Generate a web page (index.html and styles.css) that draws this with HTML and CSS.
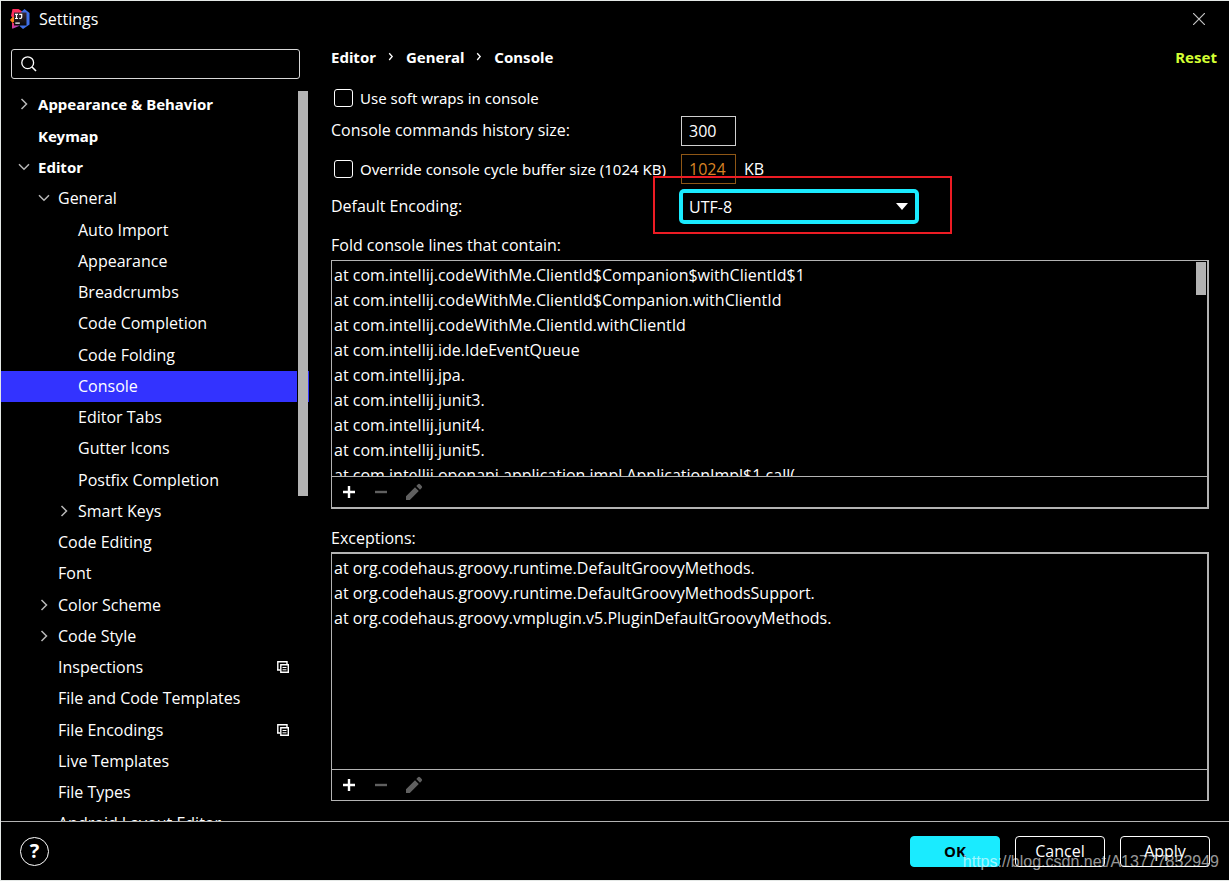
FILE: index.html
```html
<!DOCTYPE html>
<html lang="en">
<head>
<meta charset="utf-8">
<title>Settings</title>
<link rel="stylesheet" href="styles.css">
</head>
<body>
<svg class="sprite" aria-hidden="true">
  <symbol id="right" viewBox="0 0 16 16"><path d="M5.5 3 10.500 8l-5 5" fill="none" stroke="#b8b8b8" stroke-width="1.5"/></symbol>
  <symbol id="down" viewBox="0 0 16 16"><path d="M3 5.2 8 10.2l5-5" fill="none" stroke="#b8b8b8" stroke-width="1.5"/></symbol>
  <symbol id="crumb" viewBox="0 0 6 10"><path d="M1.2 1.2 4.2 4.500 1.2 8" fill="none" stroke="#fff" stroke-width="1.3"/></symbol>
  <symbol id="copy" viewBox="0 0 12 12"><path d="M.8 9V.8H10M0 9h3M10 0v3" fill="none" stroke="#fff" stroke-width="1.4"/><path d="M3.8 3.8h7.5v7.5H3.8z" fill="#000" stroke="#fff" stroke-width="1.4"/><path d="M5.5 6.5h4M5.5 8.8h4" stroke="#fff"/></symbol>
  <symbol id="plus" viewBox="0 0 16 16"><path d="M8 2v12M2 8h12" stroke="#fff" stroke-width="2.4"/></symbol>
  <symbol id="minus" viewBox="0 0 16 16"><path d="M2 8h12" stroke="#606060" stroke-width="2.4"/></symbol>
  <symbol id="pencil" viewBox="0 0 18 18"><path d="M1 17v-3.800L10 4.200l3.800 3.800-9 9zM11.300 3 13 1.300q1-.9 2 0l1.700 1.700q.9 1 0 2l-1.700 1.700z" fill="#606060"/></symbol>
</svg>
<div class="window">
  <header class="titlebar">
    <svg class="logo" viewBox="0 0 20 20" aria-hidden="true">
      <defs>
        <linearGradient id="lg1" x1="0" y1="0" x2="1" y2="1"><stop offset="0" stop-color="#ff3158"/><stop offset="1" stop-color="#8a4af7"/></linearGradient>
        <linearGradient id="lg2" x1="0" y1="0" x2="0" y2="1"><stop offset="0" stop-color="#3a2a34"/><stop offset="1" stop-color="#080808"/></linearGradient>
      </defs>
      <path d="M2.500 0h6L13 3 5 11 1 7z" fill="#fe2d5c"/>
      <path d="M0 11 3 7.500 6 11 2.500 14z" fill="#fc8419"/>
      <path d="M2 14h8l-1 3-6 2.500H2z" fill="url(#lg1)"/>
      <path d="M11 3 14.500 0l5 4v11.500L13 20l-4-3.500 6-2z" fill="#3f6fe8"/>
      <path d="M4 3.500h12.500v13H4z" fill="url(#lg2)"/>
      <path d="M5 5.300h3M6.500 5.300V9.500M5 9.500h3M9.200 5.300h2.500v2.800q0 1.600-2.400 1.300M5.300 14.200h4.500" fill="none" stroke="#fff" stroke-width="1.200"/>
    </svg>
    <h1 class="title">Settings</h1>
    <button class="close" aria-label="Close"><svg viewBox="0 0 12 12" width="12" height="12"><path d="M0 0 12 12M12 0 0 12" stroke="#c4c4c4" stroke-width="1.200"/></svg></button>
  </header>
  <div class="main">
    <aside class="sidebar">
      <label class="search">
        <svg viewBox="0 0 16 16" aria-hidden="true"><circle cx="6.700" cy="6.700" r="5.900" fill="none" stroke="#fff" stroke-width="1.300"/><path d="m11 11 4 4" stroke="#fff" stroke-width="1.600"/></svg>
        <input type="text" aria-label="Search settings">
      </label>
      <div class="tree-pane">
        <ul class="tree">
          <li class="row l1 bold"><svg><use href="#right"/></svg>Appearance &amp; Behavior</li>
          <li class="row l1 bold"><svg></svg>Keymap</li>
          <li class="row l1 bold"><svg><use href="#down"/></svg>Editor</li>
          <li class="row l2"><svg><use href="#down"/></svg>General</li>
          <li class="row l3"><svg></svg>Auto Import</li>
          <li class="row l3"><svg></svg>Appearance</li>
          <li class="row l3"><svg></svg>Breadcrumbs</li>
          <li class="row l3"><svg></svg>Code Completion</li>
          <li class="row l3"><svg></svg>Code Folding</li>
          <li class="row l3 selected"><svg></svg>Console</li>
          <li class="row l3"><svg></svg>Editor Tabs</li>
          <li class="row l3"><svg></svg>Gutter Icons</li>
          <li class="row l3"><svg></svg>Postfix Completion</li>
          <li class="row l3"><svg><use href="#right"/></svg>Smart Keys</li>
          <li class="row l2"><svg></svg>Code Editing</li>
          <li class="row l2"><svg></svg>Font</li>
          <li class="row l2"><svg><use href="#right"/></svg>Color Scheme</li>
          <li class="row l2"><svg><use href="#right"/></svg>Code Style</li>
          <li class="row l2"><svg></svg>Inspections<svg class="copy"><use href="#copy"/></svg></li>
          <li class="row l2"><svg></svg>File and Code Templates</li>
          <li class="row l2"><svg></svg>File Encodings<svg class="copy"><use href="#copy"/></svg></li>
          <li class="row l2"><svg></svg>Live Templates</li>
          <li class="row l2"><svg></svg>File Types</li>
          <li class="row l2"><svg></svg>Android Layout Editor</li>
        </ul>
        <div class="tree-thumb"></div>
      </div>
    </aside>
    <main class="content">
      <div class="heading">
        <nav class="crumbs"><span>Editor</span><svg><use href="#crumb"/></svg><span>General</span><svg><use href="#crumb"/></svg><span>Console</span></nav>
        <a class="reset" href="#">Reset</a>
      </div>
      <form class="form">
        <label class="check wide"><input type="checkbox">Use soft wraps in console</label>
        <label class="name" for="history">Console commands history size:</label>
        <div><input class="field" id="history" type="text" value="300"></div>
        <label class="check"><input type="checkbox">Override console cycle buffer size (1024 KB)</label>
        <div class="unit"><input class="field dim" type="text" value="1024" aria-label="Buffer size">KB</div>
        <label class="name" for="encoding">Default Encoding:</label>
        <div class="combo">
          <select id="encoding"><option>UTF-8</option></select>
          <svg class="arrow" viewBox="0 0 12 7" aria-hidden="true"><path d="M0 0h12L6 7z" fill="#fff"/></svg>
          <div class="marker"></div>
        </div>
      </form>
      <h2 class="caption">Fold console lines that contain:</h2>
      <section class="panel fold">
        <ul class="lines">
          <li>at com.intellij.codeWithMe.ClientId$Companion$withClientId$1</li>
          <li>at com.intellij.codeWithMe.ClientId$Companion.withClientId</li>
          <li>at com.intellij.codeWithMe.ClientId.withClientId</li>
          <li>at com.intellij.ide.IdeEventQueue</li>
          <li>at com.intellij.jpa.</li>
          <li>at com.intellij.junit3.</li>
          <li>at com.intellij.junit4.</li>
          <li>at com.intellij.junit5.</li>
          <li>at com.intellij.openapi.application.impl.ApplicationImpl$1.call(</li>
        </ul>
        <div class="list-thumb"></div>
        <div class="tools">
          <button aria-label="Add"><svg><use href="#plus"/></svg></button>
          <button aria-label="Remove"><svg><use href="#minus"/></svg></button>
          <button aria-label="Edit"><svg class="pencil"><use href="#pencil"/></svg></button>
        </div>
      </section>
      <h2 class="caption second">Exceptions:</h2>
      <section class="panel exceptions">
        <ul class="lines">
          <li>at org.codehaus.groovy.runtime.DefaultGroovyMethods.</li>
          <li>at org.codehaus.groovy.runtime.DefaultGroovyMethodsSupport.</li>
          <li>at org.codehaus.groovy.vmplugin.v5.PluginDefaultGroovyMethods.</li>
        </ul>
        <div class="tools">
          <button aria-label="Add"><svg><use href="#plus"/></svg></button>
          <button aria-label="Remove"><svg><use href="#minus"/></svg></button>
          <button aria-label="Edit"><svg class="pencil"><use href="#pencil"/></svg></button>
        </div>
      </section>
    </main>
  </div>
  <footer class="footer">
    <button class="help" aria-label="Help">?</button>
    <button class="btn primary">OK</button>
    <button class="btn">Cancel</button>
    <button class="btn">Apply</button>
    <div class="watermark">https://blog.csdn.net/A13777852949</div>
  </footer>
</div>
</body>
</html>
```
FILE: styles.css
```css
* { box-sizing: border-box; }
body {
  margin: 0;
  background: #000;
  color: #fff;
  font: 16px/24px "Open Sans", "Noto Sans", sans-serif;
}
ul, h1, h2 { margin: 0; padding: 0; list-style: none; font-size: inherit; font-weight: 400; }
button, input, select { font: inherit; color: inherit; margin: 0; }
button { background: none; border: 0; padding: 0; }
svg { display: block; flex: none; }
.sprite { position: absolute; width: 0; height: 0; }

.window {
  height: 100vh;
  display: flex;
  flex-direction: column;
  border: 1px solid #e4e8e6;
  border-right: 0;
}
.titlebar { height: 36px; display: flex; align-items: center; padding: 0 24px 0 9px; flex: none; }
.logo { width: 20px; height: 20px; }
.title { margin-left: 9px; }
.close { margin-left: auto; display: flex; }

.main { flex: 1; min-height: 0; display: flex; }
.sidebar { width: 308px; flex: none; display: flex; flex-direction: column; padding-top: 12px; }
.search {
  height: 30px;
  flex: none;
  margin: 0 9px 0 10px;
  border: 1px solid #d8d8d8;
  border-radius: 3px;
  display: flex;
  align-items: center;
  padding-left: 9px;
}
.search svg { width: 16px; height: 16px; }
.search input { flex: 1; min-width: 0; border: 0; background: none; outline: 0; }
.tree-pane { flex: 1; min-height: 0; overflow: hidden; position: relative; margin-top: 10px; }
.tree { display: grid; grid-auto-rows: 32px 31px 31px 31px; }
.row { display: flex; align-items: center; gap: 6px; padding-bottom: 1px; }
.row svg { width: 16px; height: 16px; }
.l1 { padding-left: 15px; }
.l2 { padding-left: 35px; }
.l3 { padding-left: 55px; }
.bold { font-family: "Noto Sans", sans-serif; font-weight: 700; font-size: 15px; padding-bottom: 2px; }
.selected { background: #3333ff; }
.row .copy { width: 12px; height: 12px; margin-left: auto; margin-right: 20px; }
.tree-thumb {
  position: absolute;
  top: 2px;
  right: 1px;
  width: 11px;
  height: 405px;
  background: #b3b3b3;
  border-left: 1px solid #000;
}

.content { flex: 1; min-width: 0; display: flex; flex-direction: column; padding: 8px 20px 20px 22px; }
.heading { display: flex; justify-content: space-between; font-family: "Noto Sans", sans-serif; font-weight: 700; font-size: 15px; margin-right: -8px; }
.crumbs { display: flex; align-items: center; gap: 12px; }
.crumbs svg { width: 6px; height: 10px; }
.reset { color: #d4ff33; text-decoration: none; }
.form { display: grid; grid-template-columns: 350px 1fr; grid-template-rows: 28px 38px 38px 37px; align-items: center; padding-top: 15px; }
.wide { grid-column: 1 / -1; }
.name { padding-bottom: 2px; }
.check { display: flex; align-items: center; white-space: nowrap; gap: 7px; padding-left: 3px; font-family: "Noto Sans", sans-serif; font-size: 15px; }
.check input { appearance: none; width: 19px; height: 18px; border: 1px solid #fff; border-radius: 3px; flex: none; }
.field { display: block; width: 55px; height: 30px; border: 1px solid #d0d0d0; background: #000; padding: 0 7px; outline: 0; }
.dim { color: #d98324; border-color: #8f5716; }
.unit { display: flex; align-items: center; gap: 8px; }
.combo { position: relative; width: 236px; }
.combo select {
  appearance: none;
  display: block;
  width: 100%;
  height: 31px;
  padding: 0 6px;
  border: 2px solid #1aebff;
  border-radius: 3px;
  box-shadow: 0 0 0 2px #1aebff;
  background: #000;
  outline: 0;
}
.arrow { position: absolute; right: 9px; top: 12px; width: 12px; height: 7px; }
.marker { position: absolute; inset: -15px -35px -12px -28px; border: 2px solid #ed1c24; pointer-events: none; }

.caption { margin: 8px 0 3px; }
.second { margin-top: 17px; margin-bottom: 2px; }
.panel { position: relative; flex: 1; min-height: 0; display: flex; flex-direction: column; border: 1px solid #b3b3b3; border-right-width: 2px; }
.fold { border-bottom-width: 2px; }
.exceptions { border-top-width: 2px; }
.lines { flex: 1; min-height: 0; overflow: hidden; padding: 2px; line-height: 25px; white-space: nowrap; }
.list-thumb { position: absolute; top: 1px; right: 1px; width: 10px; height: 33px; background: #b3b3b3; }
.tools { flex: none; height: 31px; border-top: 1px solid #b3b3b3; display: flex; align-items: center; gap: 16px; padding-left: 9px; }
.tools svg { width: 16px; height: 16px; }
.tools .pencil { width: 18px; height: 18px; }

.footer { position: relative; flex: none; height: 59px; border-top: 1px solid #b3b3b3; display: flex; align-items: center; gap: 15px; padding: 0 19px; }
.help { width: 29px; height: 29px; border: 1px solid #fff; border-radius: 50%; font-size: 20px; line-height: 24px; font-weight: 700; margin-right: auto; }
.btn { width: 90px; height: 31px; border: 1px solid #fff; border-radius: 4px; }
.primary { background: #1aebff; border-color: #1aebff; color: #000; font-weight: 700; font-size: 15px; }
.watermark { position: absolute; right: 10px; bottom: 6px; font: 16px/24px "Liberation Sans", sans-serif; color: rgba(255, 255, 255, 0.6); pointer-events: none; }
```
